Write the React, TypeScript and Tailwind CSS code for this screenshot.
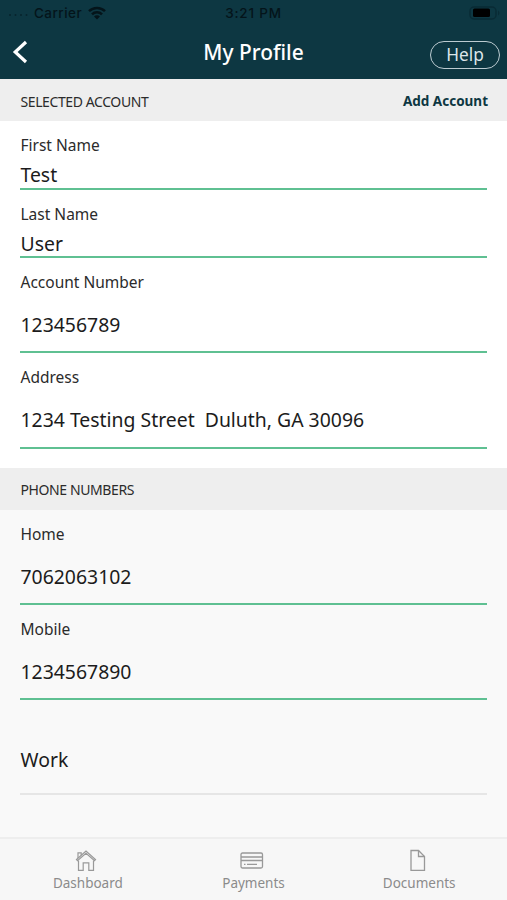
import { ReactNode } from 'react';
import clsx from 'clsx';

type FieldProps = {
  label: string;
  value: string;
  compact?: boolean;
};

function Field({ label, value, compact }: FieldProps) {
  return (
    <div
      className={clsx(
        'flex flex-col border-b-2 border-[#5fc092] pt-3',
        compact ? 'h-[68.5px]' : 'h-[95.25px]'
      )}
    >
      <span className="h-6 pl-[0.5px] text-[15.5px] leading-6 text-[#2b2b2b]">{label}</span>
      <span
        className={clsx(
          'whitespace-pre pl-[0.5px] text-[19.4px] leading-7 text-[#1c1c1c]',
          compact ? 'mt-1' : 'mt-[17px]'
        )}
      >
        {value}
      </span>
    </div>
  );
}

function SectionHeader({ title, action }: { title: string; action?: string }) {
  return (
    <div className="flex h-[42px] shrink-0 items-center justify-between bg-[#eeeeee] pt-[2px] pr-[19px] pl-5">
      <h2 className="pl-[0.5px] text-[14px] tracking-[-0.4px] text-[#2b2b2b]">{title}</h2>
      {action && <button className="text-[13.5px] font-bold text-[#0d3742]">{action}</button>}
    </div>
  );
}

function Tab({ label, children }: { label: string; children: ReactNode }) {
  return (
    <button className="flex flex-1 flex-col items-center pt-[9px] text-[#8b8b8b]">
      <span className="mr-[3px] text-[#999999]">{children}</span>
      <span className="mt-[1px] text-[13.5px] leading-5">{label}</span>
    </button>
  );
}

function StatusBar() {
  return (
    <div className="grid h-[26px] grid-cols-3 items-center font-['Inter',sans-serif] text-[13.5px] font-medium tracking-[0.45px] text-[#04141a]">
      <div className="flex items-center pl-2">
        <svg width="22" height="6" className="mr-1 text-[#07242d]" fill="currentColor">
          <circle cx="2" cy="5" r="1" />
          <circle cx="7.5" cy="5" r="1" />
          <circle cx="13" cy="5" r="1" />
          <circle cx="18.5" cy="5" r="1" />
        </svg>
        <span>Carrier</span>
        <svg width="18" height="14" viewBox="0 0 18 14" className="ml-1.5" fill="none" stroke="currentColor" strokeWidth="2.5">
          <path d="M1 5.2a11.3 11.3 0 0 1 16 0M4 8.3a7 7 0 0 1 10 0" />
          <path d="M9 13.5 6 10.4a4.2 4.2 0 0 1 6 0z" fill="currentColor" stroke="none" />
        </svg>
      </div>
      <span className="text-center tracking-[0.8px]">3:21 PM</span>
      <svg width="32" height="14" viewBox="0 0 32 14" className="mr-1.5 justify-self-end">
        <rect x="1" y="1" width="26" height="12" rx="4" fill="none" stroke="#092b35" strokeWidth="1.5" />
        <rect x="4" y="2.5" width="17" height="8.5" rx="1.5" fill="#000000" />
        <path d="M29 4.5v5q3-2.5 0-5" fill="#092b35" />
      </svg>
    </div>
  );
}

export default function App() {
  return (
    <div className="flex h-[900px] w-[507px] flex-col overflow-hidden bg-[#f9f9f9] font-['Noto_Sans',sans-serif]">
      <header className="h-[79px] shrink-0 bg-[#0d3742]">
        <StatusBar />
        <div className="grid h-[53px] grid-cols-3 items-center">
          <button className="pb-[2px] pl-3">
            <svg width="16" height="24" viewBox="0 0 16 24" fill="none" stroke="#ffffff" strokeWidth="3.2">
              <path d="M14 2 3.2 12 14 22" />
            </svg>
          </button>
          <h1 className="text-center text-[20.9px] font-medium text-white">My Profile</h1>
          <button className="mt-[5px] mr-[7px] flex h-7 w-[70px] items-center justify-center justify-self-end rounded-full border-[1.5px] border-[#bccbd1] text-[17.3px] text-[#dce5e9]">
            Help
          </button>
        </div>
      </header>

      <SectionHeader title="SELECTED ACCOUNT" action="Add Account" />
      <section className="h-[346.5px] shrink-0 bg-white px-5">
        <Field label="First Name" value="Test" compact />
        <Field label="Last Name" value="User" compact />
        <Field label="Account Number" value="123456789" />
        <Field label="Address" value="1234 Testing Street  Duluth, GA 30096" />
      </section>

      <SectionHeader title="PHONE NUMBERS" />
      <section className="min-h-0 flex-1 px-5">
        <Field label="Home" value="7062063102" />
        <Field label="Mobile" value="1234567890" />
        <div className="h-[95px] border-b-2 border-[#e6e6e6] pt-[46px] pl-[0.5px] text-[19.4px] leading-7 text-[#1c1c1c]">
          Work
        </div>
      </section>

      <nav className="flex h-[63px] shrink-0 border-t-2 border-[#eeeeee] bg-[#f7f7f7] px-[5px]">
        <Tab label="Dashboard">
          <svg width="22" height="24" viewBox="0 0 22 24" fill="none" stroke="currentColor" strokeWidth="1.2">
            <path d="M1.5 11.5 11 3l9.5 8.5-1 1.1L11 5.4l-8.5 7.2z" />
            <path d="M3.5 12.5v9.8h4.7v-7.5h5.6v7.5h4.7v-9.8M3 10V4.8h3.2v2.4" />
          </svg>
        </Tab>
        <Tab label="Payments">
          <svg width="24" height="24" viewBox="0 0 24 24" fill="none" stroke="currentColor" strokeWidth="1.3">
            <rect x="1" y="5" width="21.5" height="15" rx="1.5" />
            <path d="M1 9h21.5M1 12.5h21.5M4 16.3h1.5M7 16.3h10" />
          </svg>
        </Tab>
        <Tab label="Documents">
          <svg width="18" height="24" viewBox="0 0 18 24" fill="none" stroke="currentColor" strokeWidth="1.3">
            <path d="M2 2.5h7.5l6 6v13.8H2z" />
            <path d="M9.5 2.5v6h6" />
          </svg>
        </Tab>
      </nav>
    </div>
  );
}
